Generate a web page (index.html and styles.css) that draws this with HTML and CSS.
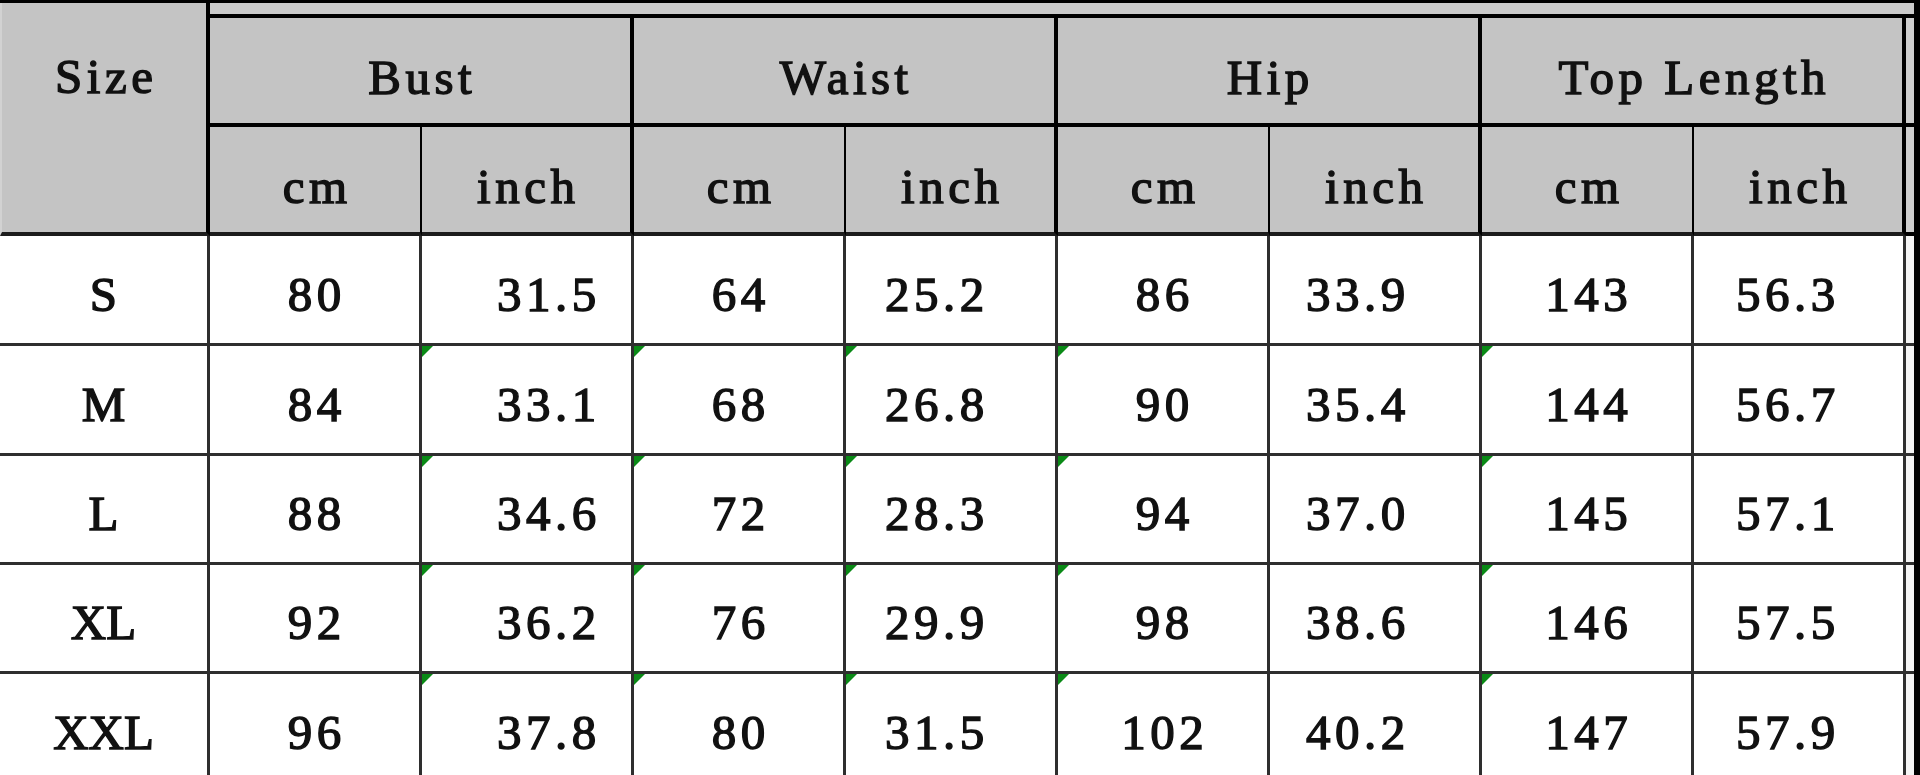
FILE: index.html
```html
<!DOCTYPE html>
<html lang="en">
<head>
<meta charset="utf-8">
<title>Size Chart</title>
<link rel="stylesheet" href="styles.css">
</head>
<body>
<div class="sheet">
  <div class="size-h"><span class="t">Size</span></div>
  <div class="strip"></div>

  <div class="grp"><span class="t">Bust</span></div>
  <div class="grp"><span class="t">Waist</span></div>
  <div class="grp"><span class="t">Hip</span></div>
  <div class="grp"><span class="t">Top Length</span></div>
  <div class="xh"></div>

  <div class="unit cm"><span class="t">cm</span></div>
  <div class="unit inch"><span class="t">inch</span></div>
  <div class="unit cm"><span class="t">cm</span></div>
  <div class="unit inch"><span class="t">inch</span></div>
  <div class="unit cm"><span class="t">cm</span></div>
  <div class="unit inch"><span class="t">inch</span></div>
  <div class="unit cm"><span class="t">cm</span></div>
  <div class="unit inch"><span class="t">inch</span></div>
  <div class="xh"></div>

  <div class="c sz"><span class="t">S</span></div>
  <div class="c"><span class="t">80</span></div>
  <div class="c in-b"><span class="t">31.5</span></div>
  <div class="c"><span class="t">64</span></div>
  <div class="c in-w"><span class="t">25.2</span></div>
  <div class="c"><span class="t">86</span></div>
  <div class="c in-h"><span class="t">33.9</span></div>
  <div class="c"><span class="t">143</span></div>
  <div class="c in-t"><span class="t">56.3</span></div>
  <div class="xd"></div>

  <div class="c sz"><span class="t">M</span></div>
  <div class="c"><span class="t">84</span></div>
  <div class="c in-b flag"><span class="t">33.1</span></div>
  <div class="c flag"><span class="t">68</span></div>
  <div class="c in-w flag"><span class="t">26.8</span></div>
  <div class="c flag"><span class="t">90</span></div>
  <div class="c in-h"><span class="t">35.4</span></div>
  <div class="c flag"><span class="t">144</span></div>
  <div class="c in-t"><span class="t">56.7</span></div>
  <div class="xd"></div>

  <div class="c sz"><span class="t">L</span></div>
  <div class="c"><span class="t">88</span></div>
  <div class="c in-b flag"><span class="t">34.6</span></div>
  <div class="c flag"><span class="t">72</span></div>
  <div class="c in-w flag"><span class="t">28.3</span></div>
  <div class="c flag"><span class="t">94</span></div>
  <div class="c in-h"><span class="t">37.0</span></div>
  <div class="c flag"><span class="t">145</span></div>
  <div class="c in-t"><span class="t">57.1</span></div>
  <div class="xd"></div>

  <div class="c sz"><span class="t">XL</span></div>
  <div class="c"><span class="t">92</span></div>
  <div class="c in-b flag"><span class="t">36.2</span></div>
  <div class="c flag"><span class="t">76</span></div>
  <div class="c in-w flag"><span class="t">29.9</span></div>
  <div class="c flag"><span class="t">98</span></div>
  <div class="c in-h"><span class="t">38.6</span></div>
  <div class="c flag"><span class="t">146</span></div>
  <div class="c in-t"><span class="t">57.5</span></div>
  <div class="xd"></div>

  <div class="c sz last"><span class="t">XXL</span></div>
  <div class="c last"><span class="t">96</span></div>
  <div class="c in-b flag last"><span class="t">37.8</span></div>
  <div class="c flag last"><span class="t">80</span></div>
  <div class="c in-w flag last"><span class="t">31.5</span></div>
  <div class="c flag last"><span class="t">102</span></div>
  <div class="c in-h last"><span class="t">40.2</span></div>
  <div class="c flag last"><span class="t">147</span></div>
  <div class="c in-t last"><span class="t">57.9</span></div>
  <div class="xd last"></div>
</div>
</body>
</html>
```

FILE: styles.css
```css
html, body {
  margin: 0;
  padding: 0;
}

body {
  background: #000;
  height: 775px;
  overflow: hidden;
  padding-top: 3px;
  box-sizing: border-box;
  font-family: "Liberation Serif", "DejaVu Serif", serif;
  font-weight: normal;
  font-size: 49px;
  color: #111;
}

.sheet {
  display: grid;
  width: 1914px;
  grid-template-columns: 210px repeat(8, 212px) 8px;
  grid-template-rows: 15px 109px 109px 110px 110px 109px 109px 101px;
}

.sheet > div {
  box-sizing: border-box;
  display: flex;
  align-items: center;
  justify-content: center;
  position: relative;
}

.t {
  display: inline-block;
  line-height: 1;
  letter-spacing: 4.5px;
  margin-right: -4.5px;
  white-space: pre;
  -webkit-text-stroke: 1.4px #111;
}

.sz .t {
  letter-spacing: 0;
  margin-right: 0;
}

.size-h {
  grid-row: span 3;
  background: #c4c4c4;
  border-right: 4px solid #000;
  border-bottom: 4px solid #1c1c1c;
  border-left: 2px solid #d2d2d2;
  align-items: flex-start !important;
  padding-top: 49px;
}

.strip {
  grid-column: 2 / -1;
  background: #cbcbcb;
  border-bottom: 4px solid #000;
}

.grp {
  grid-column: span 2;
  background: #c4c4c4;
  border-right: 4px solid #000;
  border-bottom: 4px solid #000;
  padding-top: 13px;
}

.xh {
  background: #cfcfcf;
  border-bottom: 4px solid #000;
}

.unit {
  background: #c4c4c4;
  border-bottom: 4px solid #1c1c1c;
  padding-top: 13px;
}

.unit.cm {
  border-right: 2px solid #000;
}

.unit.inch {
  border-right: 4px solid #000;
}

.c {
  background: #fff;
  border-right: 3px solid #2e2e2e;
  border-bottom: 3px solid #2e2e2e;
  padding-top: 9px;
}

.xd {
  background: #f4f4f4;
  border-bottom: 3px solid #2e2e2e;
}

.sheet > .last {
  border-bottom: 0;
  padding-top: 0;
  align-items: flex-start;
}

.sheet > .last .t {
  margin-top: 34px;
}

.in-b { padding-left: 40px; }
.in-w { padding-right: 32px; }
.in-h { padding-right: 38px; }
.in-t { padding-right: 26px; }

.flag::before {
  content: "";
  position: absolute;
  top: 0;
  left: 0;
  width: 0;
  height: 0;
  border-top: 11px solid #0a8a16;
  border-right: 11px solid transparent;
}
```
